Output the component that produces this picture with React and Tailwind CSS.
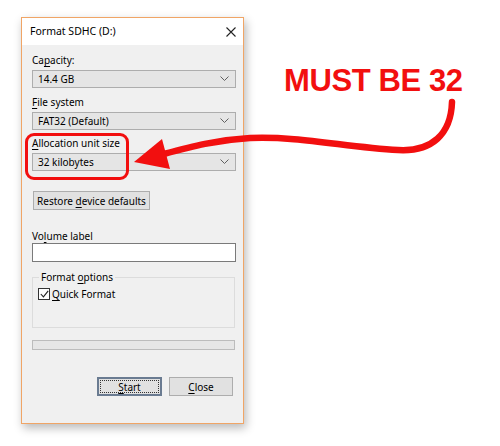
import React from "react";

const font = { fontFamily: '"Noto Sans", "Open Sans", Arial, sans-serif' };

// little chevron on the right of each combo box
const Chevron = () => (
  <svg width="9" height="6" viewBox="0 0 9 6" className="shrink-0">
    <path d="M0.5 0.5 L4.5 4.5 L8.5 0.5" fill="none" stroke="#606060" strokeWidth="1" />
  </svg>
);

const Combo = ({ value }) => (
  <div className="h-[18px] w-[204px] bg-[#e5e5e5] border border-[#adadad] flex items-center justify-between pl-[5px] pr-[6px] text-[10px] leading-none text-black whitespace-nowrap">
    <span>{value}</span>
    <Chevron />
  </div>
);

const Label = ({ children, className = "" }) => (
  <div className={`text-[10px] leading-[14px] text-black whitespace-nowrap ${className}`}>{children}</div>
);

const U = ({ children }) => <span className="underline underline-offset-2">{children}</span>;

const App = () => {
  return (
    <div className="relative w-[500px] h-[446px] bg-white overflow-hidden" style={font}>
      {/* Format dialog window */}
      <div className="ml-[21px] mt-[17px] w-[223px] h-[407px] border border-[#f0a566] bg-[#f0f0f0] flex flex-col shadow-[2px_4px_9px_rgba(0,0,0,0.28)]">
        {/* title bar */}
        <div className="h-[27px] bg-white flex items-center justify-between pl-[8px] pr-[7px]">
          <span className="text-[10.5px] text-black whitespace-nowrap">Format SDHC (D:)</span>
          <svg width="10" height="10" viewBox="0 0 10 10">
            <path d="M0.5 0.5 L9.5 9.5 M9.5 0.5 L0.5 9.5" stroke="#222" strokeWidth="1.1" />
          </svg>
        </div>

        {/* body */}
        <div className="flex-1 flex flex-col pl-[10px] pr-[7px] pt-[8px]">
          <Label className="mb-[3px]">
            Ca<U>p</U>acity:
          </Label>
          <Combo value="14.4 GB" />

          <Label className="mt-[7px] mb-[3px]">
            <U>F</U>ile system
          </Label>
          <Combo value="FAT32 (Default)" />

          <Label className="mt-[6px] mb-[3px]">
            <U>A</U>llocation unit size
          </Label>
          <Combo value="32 kilobytes" />

          <div className="mt-[20px] ml-[1px] h-[19px] w-[117px] bg-[#e1e1e1] border border-[#adadad] flex items-center justify-center text-[10px] leading-none text-black whitespace-nowrap">
            <span>
              Restore <U>d</U>evice defaults
            </span>
          </div>

          <Label className="mt-[19px]">
            Vo<U>l</U>ume label
          </Label>
          <div className="h-[19px] w-[204px] bg-white border border-[#7a7a7a]" />

          <fieldset className="mt-[8px] w-[203px] h-[58px] border border-[#dcdcdc] pl-[5px]">
            <legend className="ml-[1px] px-[2px] text-[10px] leading-[14px] text-black whitespace-nowrap">
              Format <U>o</U>ptions
            </legend>
            <div className="mt-[4px] flex items-center gap-[2px] text-[10px] leading-none text-black whitespace-nowrap">
              <div className="w-[12px] h-[12px] bg-white border border-[#333] flex items-center justify-center">
                <svg width="9" height="8" viewBox="0 0 9 8">
                  <path d="M0.8 4 L3.4 6.8 L8.2 0.8" fill="none" stroke="#222" strokeWidth="1.1" />
                </svg>
              </div>
              <span>
                <U>Q</U>uick Format
              </span>
            </div>
          </fieldset>

          <div className="mt-[12px] w-[203px] h-[10px] bg-[#e6e6e6] border border-[#bcbcbc]" />

          <div className="mt-[27px] flex justify-end gap-[7px] pr-[3px]">
            <div className="h-[19px] w-[65px] bg-[#e1e1e1] border-2 border-[#6a7b91] p-[1px]">
              <div className="h-full w-full border border-dotted border-[#333] flex items-center justify-center text-[10px] leading-none text-black">
                <span>
                  <U>S</U>tart
                </span>
              </div>
            </div>
            <div className="h-[19px] w-[64px] bg-[#e1e1e1] border border-[#adadad] flex items-center justify-center text-[10px] leading-none text-black">
              <span>
                <U>C</U>lose
              </span>
            </div>
          </div>
        </div>
      </div>

      {/* annotation: red box around allocation size */}
      <div className="absolute left-[25px] top-[133px] w-[104px] h-[47px] border-[3px] border-[#f20f0f] rounded-[9px] pointer-events-none" />

      {/* annotation text */}
      <div
        className="absolute left-[284px] top-[63px] text-[31px] font-bold leading-[36px] tracking-[-0.4px] text-[#f20f0f] whitespace-nowrap"
        style={{ fontFamily: '"Liberation Sans", Arial, sans-serif' }}
      >
        MUST BE 32
      </div>

      {/* annotation arrow */}
      <svg className="absolute inset-0 pointer-events-none" width="500" height="446" viewBox="0 0 500 446">
        <path
          d="M452 102 C451 134 432 152 398 150 C345 147 300 136 250 138 C215 140 190 147 160 155"
          fill="none"
          stroke="#f20f0f"
          strokeWidth="6.5"
          strokeLinecap="round"
        />
        <polygon points="134,162 162,139 170,169" fill="#f20f0f" />
      </svg>
    </div>
  );
};

export default App;
